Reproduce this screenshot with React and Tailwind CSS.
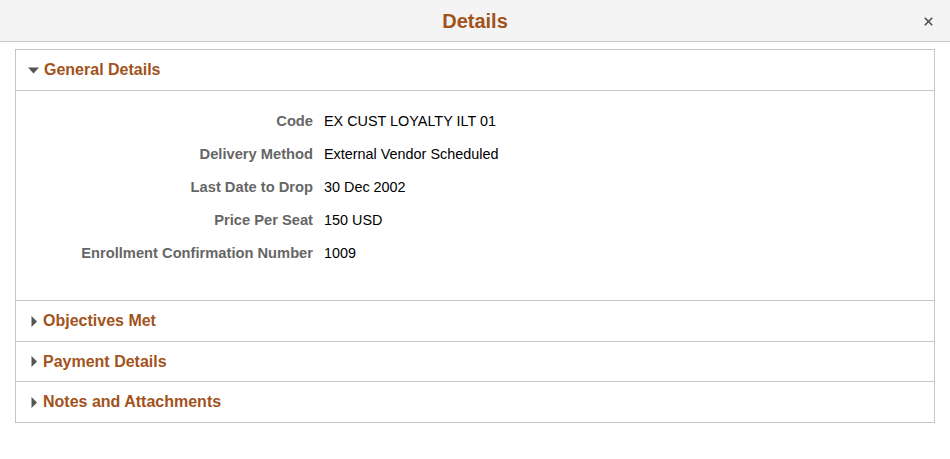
import { X } from "lucide-react";

const FIELDS = [
  { label: "Code", value: "EX CUST LOYALTY ILT 01" },
  { label: "Delivery Method", value: "External Vendor Scheduled" },
  { label: "Last Date to Drop", value: "30 Dec 2002" },
  { label: "Price Per Seat", value: "150 USD" },
  { label: "Enrollment Confirmation Number", value: "1009" },
];

const COLLAPSED = [
  { title: "Objectives Met", cls: "h-[41px] border-b border-[#c6c6c6]" },
  { title: "Payment Details", cls: "h-[40px] border-b border-[#c6c6c6]" },
  { title: "Notes and Attachments", cls: "h-[40px]" },
];

function CaretDown() {
  return (
    <svg width="11" height="7" viewBox="0 0 11 7" className="shrink-0">
      <path d="M0 0.5 H11 L5.5 6.5 Z" fill="#555" />
    </svg>
  );
}

function CaretRight() {
  return (
    <svg width="6" height="11" viewBox="0 0 6 11" className="shrink-0">
      <path d="M0.5 0 V11 L6 5.5 Z" fill="#555" />
    </svg>
  );
}

export default function App() {
  return (
    <div className="w-[950px] h-[459px] bg-white" style={{ fontFamily: '"Liberation Sans", Arial, sans-serif' }}>
      {/* Header */}
      <div className="relative h-[42px] bg-[#f4f4f4] border-b border-[#cbcbcb] flex items-center justify-center">
        <h1 className="text-[20px] font-bold text-[#a2531c]">Details</h1>
        <button className="absolute right-[15px] top-[15px] text-[#555]">
          <X size={13} strokeWidth={3.2} />
        </button>
      </div>

      <div className="px-[15px] pt-[7px]">
        <div className="border border-[#c6c6c6]">
          {/* General Details */}
          <div className="h-[41px] flex items-center gap-[5px] pl-[12px] border-b border-[#c6c6c6]">
            <CaretDown />
            <span className="text-[16px] font-bold text-[#a2531c]">General Details</span>
          </div>
          <div className="pt-[14px] pb-[30px] border-b border-[#c6c6c6]">
            {FIELDS.map(f => (
              <div key={f.label} className="flex items-center h-[33px]">
                <div className="w-[297px] text-right text-[14.7px] font-bold text-[#666]">{f.label}</div>
                <div className="pl-[11px] text-[14.4px] text-black">{f.value}</div>
              </div>
            ))}
          </div>

          {/* Collapsed sections */}
          {COLLAPSED.map(s => (
            <div key={s.title} className={`flex items-center gap-[6px] pl-[15px] ${s.cls}`}>
              <CaretRight />
              <span className="text-[16px] font-bold text-[#a2531c]">{s.title}</span>
            </div>
          ))}
        </div>
      </div>
    </div>
  );
}
